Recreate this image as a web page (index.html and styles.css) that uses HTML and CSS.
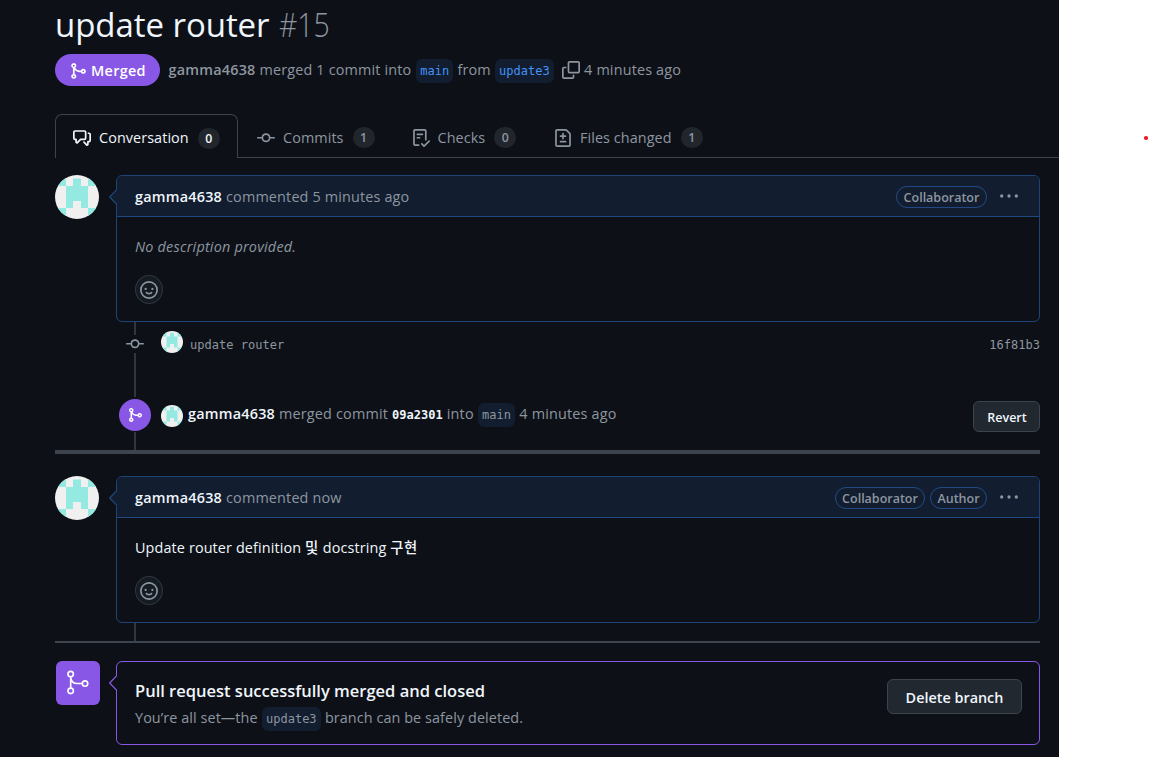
FILE: index.html
```
<!DOCTYPE html>
<html lang="en">
<head>
<meta charset="utf-8">
<title>update router #15</title>
<link rel="stylesheet" href="styles.css">
</head>
<body>
<svg class="defs" aria-hidden="true">
  <symbol id="i-merge" viewBox="0 0 16 16"><path d="M5.45 5.154A4.25 4.25 0 0 0 9.25 7.5h1.378a2.251 2.251 0 1 1 0 1.5H9.25A5.734 5.734 0 0 1 5 7.123v3.505a2.25 2.25 0 1 1-1.5 0V5.372a2.25 2.25 0 1 1 1.95-.218ZM4.25 13.5a.75.75 0 1 0 0-1.5.75.75 0 0 0 0 1.5Zm8.5-4.5a.75.75 0 1 0 0-1.5.75.75 0 0 0 0 1.5ZM5 3.25a.75.75 0 1 0 0 .005V3.25Z"/></symbol>
  <symbol id="i-merge-lg" viewBox="0 0 24 24"><g fill="none" stroke="currentColor" stroke-width="1.5"><circle cx="5.25" cy="3.75" r="2.5"/><circle cx="5.25" cy="19.25" r="2.5"/><circle cx="18.500" cy="12.500" r="2.5"/><path d="M5.25 6.250v10.5M5.25 7c.6 3.3 3 5.500 6 5.500h4.75"/></g></symbol>
  <symbol id="i-copy" viewBox="0 0 16 16"><path d="M0 6.75C0 5.784.784 5 1.75 5h1.5a.75.75 0 0 1 0 1.5h-1.5a.25.25 0 0 0-.25.25v7.5c0 .138.112.25.25.25h7.5a.25.25 0 0 0 .25-.25v-1.5a.75.75 0 0 1 1.5 0v1.5A1.75 1.75 0 0 1 9.25 16h-7.5A1.75 1.75 0 0 1 0 14.25Z"/><path d="M5 1.75C5 .784 5.784 0 6.75 0h7.5C15.216 0 16 .784 16 1.75v7.5A1.75 1.75 0 0 1 14.25 11h-7.5A1.75 1.75 0 0 1 5 9.25Zm1.75-.25a.25.25 0 0 0-.25.25v7.5c0 .138.112.25.25.25h7.5a.25.25 0 0 0 .25-.25v-7.5a.25.25 0 0 0-.25-.25Z"/></symbol>
  <symbol id="i-discussion" viewBox="0 0 16 16"><path d="M1.75 1h8.5c.966 0 1.75.784 1.75 1.75v5.5A1.75 1.75 0 0 1 10.25 10H7.061l-2.574 2.573A1.458 1.458 0 0 1 2 11.543V10h-.25A1.75 1.75 0 0 1 0 8.25v-5.5C0 1.784.784 1 1.75 1ZM1.5 2.75v5.5c0 .138.112.25.25.25h1a.75.75 0 0 1 .75.75v2.19l2.72-2.72a.749.749 0 0 1 .53-.22h3.5a.25.25 0 0 0 .25-.25v-5.5a.25.25 0 0 0-.25-.25h-8.5a.25.25 0 0 0-.25.25Zm13 2a.25.25 0 0 0-.25-.25h-.5a.75.75 0 0 1 0-1.5h.5c.966 0 1.75.784 1.75 1.75v5.5A1.75 1.75 0 0 1 14.25 12H14v1.543a1.458 1.458 0 0 1-2.487 1.03L9.22 12.28a.749.749 0 0 1 1.06-1.06l2.22 2.22v-2.19a.75.75 0 0 1 .75-.75h1a.25.25 0 0 0 .25-.25Z"/></symbol>
  <symbol id="i-commit" viewBox="0 0 16 16"><path d="M11.93 8.5a4.002 4.002 0 0 1-7.86 0H.75a.75.75 0 0 1 0-1.5h3.32a4.002 4.002 0 0 1 7.86 0h3.32a.75.75 0 0 1 0 1.5Zm-1.43-.75a2.5 2.5 0 1 0-5 0 2.5 2.5 0 0 0 5 0Z"/></symbol>
  <symbol id="i-checklist" viewBox="0 0 16 16"><path d="M2.5 1.75v11.5c0 .138.112.25.25.25h3.17a.75.75 0 0 1 0 1.5H2.75A1.75 1.75 0 0 1 1 13.25V1.75C1 .784 1.784 0 2.75 0h8.5C12.216 0 13 .784 13 1.75v7.736a.75.75 0 0 1-1.5 0V1.75a.25.25 0 0 0-.25-.25h-8.5a.25.25 0 0 0-.25.25Zm13.274 9.537-4.557 4.45a.75.75 0 0 1-1.055-.008l-1.943-1.95a.75.75 0 0 1 1.062-1.058l1.419 1.425 4.026-3.932a.75.75 0 1 1 1.048 1.074ZM4.75 4h4.5a.75.75 0 0 1 0 1.5h-4.5a.75.75 0 0 1 0-1.5ZM4 7.75A.75.75 0 0 1 4.75 7h2a.75.75 0 0 1 0 1.5h-2A.75.75 0 0 1 4 7.75Z"/></symbol>
  <symbol id="i-diff" viewBox="0 0 16 16"><path d="M1 1.75C1 .784 1.784 0 2.75 0h7.586c.464 0 .909.184 1.237.513l2.914 2.914c.329.328.513.773.513 1.237v9.586A1.75 1.75 0 0 1 13.25 16H2.75A1.75 1.75 0 0 1 1 14.25Zm1.75-.25a.25.25 0 0 0-.25.25v12.5c0 .138.112.25.25.25h10.5a.25.25 0 0 0 .25-.25V4.664a.25.25 0 0 0-.073-.177l-2.914-2.914a.25.25 0 0 0-.177-.073ZM8 3.25a.75.75 0 0 1 .75.75v1.5h1.5a.75.75 0 0 1 0 1.5h-1.5v1.5a.75.75 0 0 1-1.5 0V7h-1.5a.75.75 0 0 1 0-1.5h1.5V4A.75.75 0 0 1 8 3.25Zm-3 8a.75.75 0 0 1 .75-.75h4.5a.75.75 0 0 1 0 1.5h-4.5a.75.75 0 0 1-.75-.75Z"/></symbol>
  <symbol id="i-kebab" viewBox="0 0 16 16"><circle cx="1.5" cy="8" r="1.45"/><circle cx="8" cy="8" r="1.45"/><circle cx="14.5" cy="8" r="1.45"/></symbol>
  <symbol id="i-smiley" viewBox="0 0 16 16"><path d="M8 0a8 8 0 1 1 0 16A8 8 0 0 1 8 0ZM1.5 8a6.5 6.5 0 1 0 13 0 6.5 6.5 0 0 0-13 0Zm3.82 1.636a.75.75 0 0 1 1.038.175l.007.009c.103.118.22.222.35.31.264.178.683.37 1.285.37.602 0 1.02-.192 1.285-.371.13-.088.247-.192.35-.31l.007-.008a.75.75 0 0 1 1.222.87l-.022.03c-.182.248-.422.45-.715.65A3.76 3.76 0 0 1 8 12a3.76 3.76 0 0 1-2.127-.63 3 3 0 0 1-.715-.68.75.75 0 0 1 .162-1.054ZM12 7a1 1 0 1 1-2 0 1 1 0 0 1 2 0ZM5 8a1 1 0 1 1 0-2 1 1 0 0 1 0 2Z"/></symbol>
  <symbol id="i-identicon" viewBox="0 0 44 44"><path fill="#f0f0f0" d="M0 0h44v44H0z"/><path fill="#94e9e1" d="M0 0h11v11H0zM33 0h11v11H33zM18 3.500h8V11h7v22h-7v-7h-8v7h-7V11h7zM0 33h11v11H0zM33 33h11v11H33z"/></symbol>
</svg>

<main class="page">
  <h1 class="title"><span class="title-text">update router</span> <span class="title-num">#15</span></h1>

  <div class="meta">
    <span class="state"><svg class="icon"><use href="#i-merge"/></svg><span>Merged</span></span>
    <b class="meta-user">gamma4638</b>
    <span class="meta-action">merged 1 commit into</span>
    <code class="ref ref-link">main</code>
    <span class="meta-from">from</span>
    <code class="ref ref-link">update3</code>
    <svg class="icon copy"><use href="#i-copy"/></svg>
    <span class="meta-time">4 minutes ago</span>
  </div>

  <nav class="tabs">
    <a class="tab active"><svg class="icon"><use href="#i-discussion"/></svg><span>Conversation</span><span class="count">0</span></a>
    <a class="tab tab-commits"><svg class="icon"><use href="#i-commit"/></svg><span>Commits</span><span class="count">1</span></a>
    <a class="tab tab-checks"><svg class="icon"><use href="#i-checklist"/></svg><span>Checks</span><span class="count">0</span></a>
    <a class="tab tab-files"><svg class="icon"><use href="#i-diff"/></svg><span>Files changed</span><span class="count">1</span></a>
  </nav>

  <section class="item first">
    <svg class="avatar"><use href="#i-identicon"/></svg>
    <article class="comment">
      <header class="comment-head"><b class="user">gamma4638</b><span class="when">commented 5 minutes ago</span>
        <span class="labels"><span class="label">Collaborator</span></span><svg class="icon kebab"><use href="#i-kebab"/></svg></header>
      <svg class="caret" viewBox="0 0 8 16"><path d="M8 .5.700 8 8 15.500"/></svg>
      <div class="comment-body">
        <p class="empty">No description provided.</p>
        <button class="react"><svg class="icon"><use href="#i-smiley"/></svg></button>
      </div>
    </article>
  </section>

  <section class="events">
    <div class="rail rail-a"></div>
    <div class="event event-commit">
      <span class="node"><svg class="icon"><use href="#i-commit"/></svg></span>
      <svg class="avatar-sm"><use href="#i-identicon"/></svg>
      <code class="commit-msg">update router</code>
      <code class="sha">16f81b3</code>
    </div>
    <div class="rail rail-b"></div>
    <div class="event event-merge">
      <span class="node node-merged"><svg class="icon"><use href="#i-merge"/></svg></span>
      <svg class="avatar-sm"><use href="#i-identicon"/></svg>
      <span class="event-text"><b class="user">gamma4638</b><span class="e-merged">merged commit</span><code class="sha-strong">09a2301</code><span class="e-into">into</span><code class="ref">main</code><span class="e-time">4 minutes ago</span></span>
      <button class="btn btn-sm">Revert</button>
    </div>
    <div class="rail rail-c"></div>
  </section>
  <hr class="break thick">

  <section class="item second">
    <svg class="avatar"><use href="#i-identicon"/></svg>
    <article class="comment">
      <header class="comment-head"><b class="user">gamma4638</b><span class="when">commented now</span>
        <span class="labels"><span class="label label-narrow">Collaborator</span><span class="label label-author">Author</span></span><svg class="icon kebab"><use href="#i-kebab"/></svg></header>
      <svg class="caret" viewBox="0 0 8 16"><path d="M8 .5.700 8 8 15.500"/></svg>
      <div class="comment-body">
        <p class="body-text">Update router definition <span class="ko">및</span> docstring <span class="ko">구현</span></p>
        <button class="react"><svg class="icon"><use href="#i-smiley"/></svg></button>
      </div>
    </article>
  </section>
  <div class="rail rail-d"></div>
  <hr class="break">

  <section class="item closing">
    <span class="merge-tile"><svg><use href="#i-merge-lg"/></svg></span>
    <div class="merged-box">
      <svg class="caret" viewBox="0 0 8 16"><path d="M8 .5.700 8 8 15.500"/></svg>
      <div>
        <h2 class="merged-title">Pull request successfully merged and closed</h2>
        <p class="merged-sub"><span class="m-a">You’re all set—the</span><code class="ref">update3</code><span>branch can be safely deleted.</span></p>
      </div>
      <button class="btn btn-lg">Delete branch</button>
    </div>
  </section>
</main>
<aside class="margin"><span class="dot"></span></aside>
</body>
</html>
```
FILE: styles.css
```
* { box-sizing: border-box; }
body {
  margin: 0;
  height: 757px;
  display: flex;
  overflow: hidden;
  background: #fff;
  color: #8d96a0;
  font: 14.400px/22px "Open Sans", "Noto Sans CJK KR", sans-serif;
  letter-spacing: .16px;
  white-space: nowrap;
}
h1, h2, p { margin: 0; font-weight: 400; }
b { font-weight: 600; letter-spacing: .22px; }
code { font: 12px/18px "DejaVu Sans Mono", monospace; letter-spacing: .02px; }
button { font-family: inherit; padding: 0; }
svg { display: block; flex: none; }
.defs { position: absolute; width: 0; height: 0; }
.icon { width: 18px; height: 18px; fill: currentColor; }

.page { width: 1059px; height: 757px; padding-left: 55px; background: #0d1117; }
.margin { width: 90px; padding: 136px 0 0 85px; }
.dot { display: block; width: 3.500px; height: 3.500px; border-radius: 50%; background: #ed1c24; }

.title { height: 54px; padding-top: 4px; font-size: 33px; line-height: 42px; letter-spacing: -.05px; color: #f0f6fc; display: flex; gap: 9px; }
.title-num { font-weight: 300; color: #8d96a0; transform: scaleX(.86); transform-origin: left; }

.meta { display: flex; align-items: center; height: 32px; }
.state {
  display: flex; align-items: center; gap: 4px;
  width: 105px; height: 32px; padding: 1px 0 0 14px; margin-right: 8.500px;
  border-radius: 16px; background: #8957e5; color: #fff; font-weight: 600; letter-spacing: .3px;
}
.meta-user { margin-right: 4px; }
.meta-action { margin-right: 4.500px; }
.meta-from { margin-right: 4px; }
.ref { display: block; height: 24px; padding: 0 4.300px; line-height: 25px; border-radius: 6px; background: #121d2f; color: #8d96a0; margin-right: 4px; }
.ref-link { color: #4493f8; }
.meta .ref { margin-top: 1px; }
.copy { margin: 0 4px; }

.tabs { display: flex; height: 44px; margin-top: 28px; border-bottom: 1px solid #3d444d; letter-spacing: .08px; }
.tab { display: flex; align-items: center; height: 46px; margin-bottom: -1px; }
.tab .icon { margin-right: 8px; }
.tab.active { width: 183px; height: 44px; padding: 3px 0 0 17px; margin-right: 19px; border: 1px solid #3d444d; border-bottom: 0; border-radius: 7px 7px 0 0; background: #0d1117; color: #f0f6fc; }
.tab:not(.active) { padding-top: 1px; }
.tab-commits { width: 155px; }
.tab-checks { width: 142px; }
.tab.tab-checks .icon { margin-right: 7.500px; }
.count { width: 22px; height: 21px; margin-left: 9px; border-radius: 11px; background: #21262d; font-size: 12.300px; line-height: 21px; font-weight: 600; letter-spacing: 0; text-align: center; }

.item { display: flex; width: 985px; }
.first { margin-top: 17px; }
.avatar { width: 44px; height: 44px; border-radius: 50%; margin-right: 17px; }
.comment { position: relative; flex: 1; height: 147px; border: 1px solid rgba(56, 139, 253, .42); border-radius: 6px; }
.caret { position: absolute; left: -8px; top: 13px; width: 8px; height: 16px; fill: #121d2f; stroke: #20477b; stroke-width: 1.200; }
.comment-head { display: flex; align-items: center; height: 41px; padding: 0 21px 0 18px; border-bottom: 1px solid rgba(56, 139, 253, .4); border-radius: 5px 5px 0 0; background: #121d2f; }
.comment-head .user, .when { padding-top: 2px; }
.user { color: #f0f6fc; margin-right: 4px; }
.labels { display: flex; gap: 5px; margin: 2px 13px 0 auto; }
.label { width: 91px; height: 22px; border: 1px solid rgba(56, 139, 253, .42); border-radius: 11px; font-size: 12.500px; font-weight: 600; letter-spacing: 0; line-height: 21px; text-align: center; }
.label-narrow { width: 90px; }
.label-author { width: 57px; }
.comment-body { padding: 19px 18px 0; }
.empty { font-style: italic; letter-spacing: .21px; }
.body-text { color: #f0f6fc; letter-spacing: .12px; }
.ko { font-weight: 500; letter-spacing: .6px; }
.react { display: flex; align-items: center; justify-content: center; width: 28px; height: 29px; margin-top: 17px; border: 1px solid #30363d; border-radius: 50%; background: #151b23; color: #8d96a0; }

.events { width: 985px; }
.rail { width: 2px; margin-left: 79px; background: #30363d; }
.rail-a { height: 13px; }
.rail-b { height: 44px; }
.rail-c { height: 18px; }
.rail-d { height: 18px; }
.event { display: flex; align-items: center; padding-left: 64px; }
.event-commit { height: 18px; }
.node { display: flex; align-items: center; justify-content: center; width: 32px; margin-right: 10px; }
.node-merged { height: 32px; border-radius: 50%; background: #8957e5; color: #fff; }
.node-merged .icon { width: 16px; height: 16px; }
.avatar-sm { width: 22px; height: 22px; border-radius: 50%; }
.event-commit .avatar-sm { margin-top: -4px; }
.commit-msg { margin: 1px 0 0 7px; }
.sha { margin: 1px 0 0 auto; }
.event-merge { height: 35px; }
.event-merge .avatar-sm { margin: 2px 5px 0 0; }
.event-text { display: flex; align-items: center; margin-top: -2px; letter-spacing: .18px; }
.event-text .ref { margin-top: 2px; }
.sha-strong { color: #f0f6fc; font-weight: 700; margin: 2px 4px 0 4px; }
.e-into { margin-right: 4px; }

.btn { border: 1px solid #3d444d; border-radius: 6px; background: #212830; color: #f0f6fc; font-weight: 600; }
.btn-sm { width: 67px; height: 31px; margin: 4px 0 0 auto; padding: 1px 0 0 1px; font-size: 12.500px; }
.btn-lg { width: 135px; height: 35px; margin: 17px 17px 0 auto; padding-top: 2px; font-size: 14.400px; }

.break { width: 985px; height: 2px; margin: 0; border: 0; background: #3d444d; }
.thick { height: 4px; }
.second { margin-top: 22px; }

.closing { margin-top: 18px; }
.merge-tile { display: flex; align-items: center; justify-content: center; width: 44px; height: 44px; margin: 0 16px 0 1px; border-radius: 6px; background: #8957e5; color: #fff; }
.merge-tile svg { width: 26px; height: 26px; }
.merged-box { position: relative; display: flex; flex: 1; height: 84px; padding-left: 18px; border: 1px solid #8957e5; border-radius: 6px; }
.merged-box .caret { fill: #0d1117; stroke: #8957e5; }
.merged-title { padding-top: 18px; font-size: 16.500px; line-height: 22px; font-weight: 600; letter-spacing: 0; color: #f0f6fc; }
.merged-sub { display: flex; align-items: center; height: 24px; margin-top: 4px; letter-spacing: .08px; }
.merged-sub .ref { margin-top: 2px; }
.m-a { margin-right: 4px; }
```
